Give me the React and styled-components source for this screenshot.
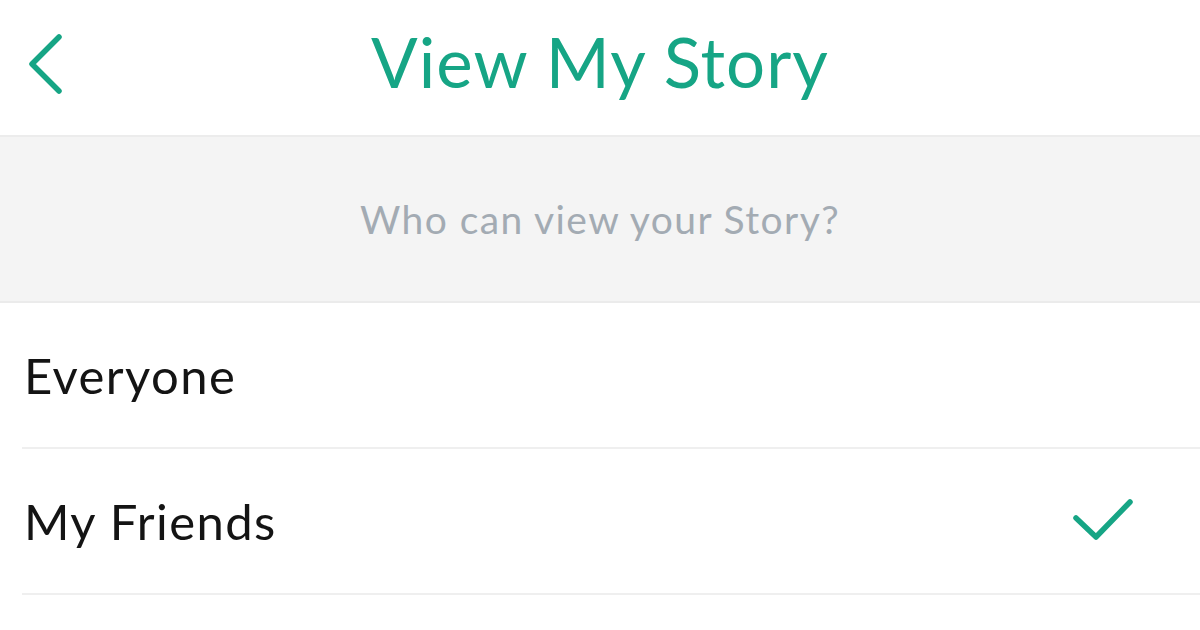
import React from 'react'
import styled, { createGlobalStyle } from 'styled-components'

const GlobalStyle = createGlobalStyle`
    body {
        margin: 0;
        background: #ffffff;
        font-family: Lato, "Noto Sans", sans-serif;
    }
`

const GREEN = '#16a585'

const Screen = styled.div`
    width: 1200px;
    height: 630px;
    overflow: hidden;
    background: #ffffff;
`

const Header = styled.header`
    height: 135px;
    border-bottom: 2px solid #ececec;
    display: grid;
    grid-template-columns: 120px 1fr 120px;
    align-items: center;
`

const BackButton = styled.button`
    border: 0;
    background: none;
    padding: 0 0 7px 29px;
    height: 100%;
    display: flex;
    align-items: center;
    cursor: pointer;
`

const Title = styled.h1`
    margin: 0 0 12px;
    text-align: center;
    color: ${GREEN};
    font-size: 69px;
    font-weight: 400;
    letter-spacing: 1px;
`

const SectionLabel = styled.div`
    height: 164px;
    background: #f4f4f4;
    border-bottom: 2px solid #ebebeb;
    display: flex;
    align-items: center;
    justify-content: center;
    color: #a3abb3;
    font-size: 39px;
    letter-spacing: 1.4px;
`

const List = styled.ul`
    list-style: none;
    margin: 0;
    padding: 0 0 0 22px;
`

const Row = styled.li`
    height: 144px;
    border-bottom: 2px solid #efefef;
    display: flex;
    align-items: center;
    justify-content: space-between;
    padding: 0 66px 0 2px;
    font-size: 49px;
    color: #141414;
    letter-spacing: 1.4px;
`

const Check = () => (
    <svg width="62" height="46" viewBox="0 0 62 46" fill="none">
        <path d="M4 20 L24 39 L58 4" stroke={GREEN} strokeWidth="5.5" strokeLinecap="round" strokeLinejoin="round" />
    </svg>
)

const Chevron = () => (
    <svg width="33" height="60" viewBox="0 0 33 60" fill="none">
        <path d="M30 3 L3 30 L30 57" stroke={GREEN} strokeWidth="5.5" strokeLinecap="round" strokeLinejoin="round" />
    </svg>
)

const options = [
    { label: 'Everyone', selected: false },
    { label: 'My Friends', selected: true },
]

function App() {
    return (
        <>
            <GlobalStyle />
            <Screen>
                <Header>
                    <BackButton aria-label="Back"><Chevron /></BackButton>
                    <Title>View My Story</Title>
                    <span />
                </Header>
                <SectionLabel>Who can view your Story?</SectionLabel>
                <List>
                    {options.map((opt) => (
                        <Row key={opt.label}>
                            {opt.label}
                            {opt.selected && <Check />}
                        </Row>
                    ))}
                </List>
            </Screen>
        </>
    )
}

export default App
